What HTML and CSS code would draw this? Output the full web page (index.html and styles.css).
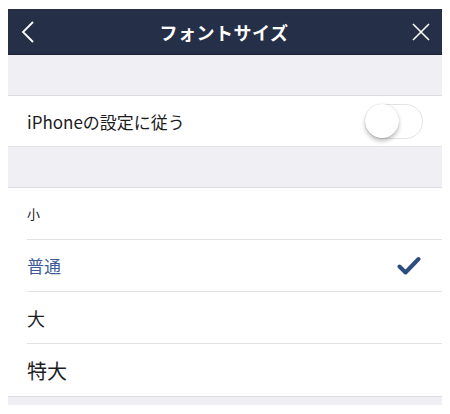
FILE: index.html
```html
<!DOCTYPE html>
<html lang="ja">
<head>
  <meta charset="UTF-8" />
  <meta name="viewport" content="width=device-width, initial-scale=1.0"/>
  <title>フォントサイズ</title>
  <link rel="stylesheet" href="styles.css">
</head>
<body>
  <div class="screen">
    <header class="nav">
      <svg class="nav-icon" width="16" height="22" viewBox="0 0 16 22">
        <path d="M13 1 L3 11 L13 21" fill="none" stroke="#fff" stroke-width="1.8"/>
      </svg>
      <h1 class="nav-title">フォントサイズ</h1>
      <svg class="nav-icon" width="18" height="18" viewBox="0 0 18 18">
        <path d="M1 1 L17 17 M17 1 L1 17" fill="none" stroke="#fff" stroke-width="1.6"/>
      </svg>
    </header>

    <div class="gap"></div>

    <div class="group">
      <div class="row bordered">
        <span class="label">iPhoneの設定に従う</span>
        <span class="toggle"><span class="knob"></span></span>
      </div>
    </div>

    <div class="gap"></div>

    <div class="group">
      <div class="row inset size-s"><span class="label">小</span></div>
      <div class="row inset size-m selected">
        <span class="label">普通</span>
        <svg width="24" height="20" viewBox="0 0 24 20">
          <path d="M2.5 10.5 L8.5 16.5 L21.5 3" fill="none" stroke="#2f4c80" stroke-width="4" stroke-linecap="round" stroke-linejoin="round"/>
        </svg>
      </div>
      <div class="row inset size-l"><span class="label">大</span></div>
      <div class="row inset size-xl last"><span class="label">特大</span></div>
    </div>

    <div class="gap small"></div>
  </div>
</body>
</html>
```

FILE: styles.css
```css
* {
  box-sizing: border-box;
}

body {
  margin: 0;
  background: #fff;
  font-family: "Noto Sans CJK JP", "Noto Sans", sans-serif;
  color: #1c1c1e;
}

.screen {
  margin: 9px 8px 0;
  width: 434px;
}

.nav {
  height: 46px;
  background: #252f47;
  display: flex;
  align-items: center;
  justify-content: space-between;
  padding: 0 12px 0 12px;
  border-bottom: 1px solid #1b2236;
}

.nav-icon {
  flex: none;
}

.nav-title {
  margin: 0;
  color: #fff;
  font-size: 18px;
  font-weight: bold;
  letter-spacing: 0.5px;
}

.gap {
  height: 41px;
  background: #efeff4;
  border-bottom: 1px solid #dcdce1;
}

.gap.small {
  height: 9px;
  border-bottom: none;
  border-top: 1px solid #dcdce1;
}

.group {
  background: #fff;
}

.row {
  height: 51px;
  display: flex;
  align-items: center;
  justify-content: space-between;
  padding: 0 19px 0 19px;
  font-size: 17px;
}

.row.bordered {
  border-bottom: 1px solid #e3e3e6;
}

.row.inset {
  height: 52px;
  padding-left: 0;
  margin-left: 19px;
  border-bottom: 1px solid #e3e3e6;
}

.row.inset.last {
  border-bottom: none;
}

.toggle {
  width: 58px;
  height: 35px;
  border-radius: 18px;
  border: 1px solid #e3e3e6;
  background: #fff;
  position: relative;
}

.knob {
  position: absolute;
  left: -1px;
  top: -1px;
  width: 34px;
  height: 34px;
  border-radius: 50%;
  background: #fff;
  box-shadow: 0 3px 4px rgba(0, 0, 0, 0.25), 0 0 1px rgba(0, 0, 0, 0.2);
}

.size-s { font-size: 13px; }
.size-m { font-size: 17px; }
.size-l { font-size: 18px; }
.size-xl { font-size: 20px; }

.selected .label {
  color: #3d5b96;
}

.selected svg {
  margin-right: 2px;
}
```
